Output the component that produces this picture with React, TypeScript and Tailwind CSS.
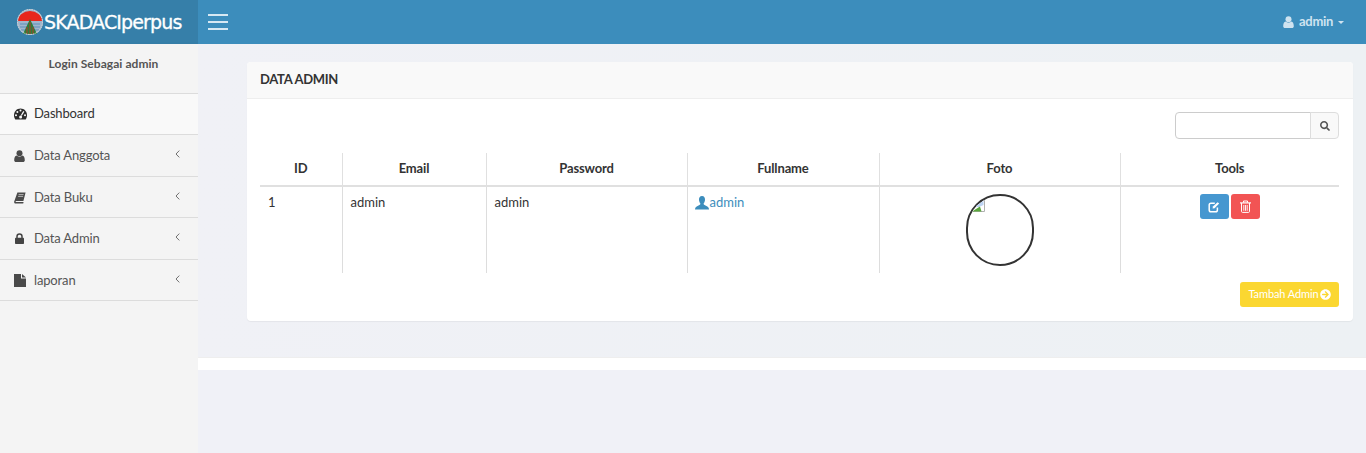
import { FaSearch, FaArrowCircleRight } from "react-icons/fa";
import type { ReactNode } from "react";

function GaugeIcon() {
  return (
    <svg width="13" height="12" viewBox="0 0 13 12" className="shrink-0">
      <path d="M6.5 0.5 C10.2 0.5 13 3.4 13 7.2 C13 8.8 12.5 10.2 11.7 11.5 H1.3 C0.5 10.2 0 8.8 0 7.2 C0 3.4 2.8 0.5 6.5 0.5 Z" fill="#2b2b2b" />
      <circle cx="2" cy="7.2" r="1" fill="#f9f9f9" />
      <circle cx="3.4" cy="3.9" r="1" fill="#f9f9f9" />
      <circle cx="6.5" cy="2.5" r="1" fill="#f9f9f9" />
      <circle cx="11" cy="7.2" r="1" fill="#f9f9f9" />
      <path d="M9.8 3.4 L7.3 7.5" stroke="#f9f9f9" strokeWidth="1.3" />
      <circle cx="6.6" cy="8.9" r="1.5" fill="#f9f9f9" />
    </svg>
  );
}

function UserIcon({ className = "" }: { className?: string }) {
  return (
    <svg width="11" height="12" viewBox="0 0 11 12" className={className} fill="currentColor">
      <circle cx="5.5" cy="3.2" r="3" />
      <path d="M0.2 10.2 C0.2 7.8 1 6 2.6 5.6 C3.4 6.3 4.4 6.7 5.5 6.7 C6.6 6.7 7.6 6.3 8.4 5.6 C10 6 10.8 7.8 10.8 10.2 C10.8 11.3 10 12 9 12 H2 C1 12 0.2 11.3 0.2 10.2 Z" />
    </svg>
  );
}

function BookIcon() {
  return (
    <svg width="12" height="12" viewBox="0 0 12 12" className="shrink-0">
      <path d="M3.4 0.5 H11.6 L9.4 9 H2.2 C1.6 9 1.4 9.6 1.8 10 H9.6 L9.2 11.5 H1.4 C0.4 11.5 -0.1 10.4 0.2 9.4 Z" fill="#4a4a4a" />
      <path d="M4.6 2.6 H9.6 M4.1 4.4 H9.1" stroke="#cfcfcf" strokeWidth="0.8" />
    </svg>
  );
}

function LockIcon() {
  return (
    <svg width="9" height="11" viewBox="0 0 9 11" fill="none">
      <path d="M2 5 V3.4 C2 1.9 3 1 4.5 1 C6 1 7 1.9 7 3.4 V5" stroke="#444" strokeWidth="1.5" />
      <rect x="0" y="4.8" width="9" height="6.2" rx="0.8" fill="#444" />
    </svg>
  );
}

function FileIcon() {
  return (
    <svg width="12" height="13" viewBox="0 0 12 13">
      <path d="M0 0 H7 V4.5 H12 V13 H0 Z" fill="#4a4a4a" />
      <path d="M8 0 L12 3.6 H8 Z" fill="#4a4a4a" />
    </svg>
  );
}

function Chevron() {
  return (
    <svg width="5" height="8" viewBox="0 0 5 8" fill="none" className="-mt-[4px] shrink-0">
      <path d="M4.3 0.6 L1 4 L4.3 7.4" stroke="#707070" strokeWidth="1" />
    </svg>
  );
}

function EditIcon() {
  return (
    <svg width="12" height="12" viewBox="0 0 12 12" fill="none">
      <path d="M6.8 2.2 H3 C2 2.2 1.2 3 1.2 4 V9 C1.2 10 2 10.8 3 10.8 H7.6 C8.6 10.8 9.4 10 9.4 9 V6.6" stroke="#fff" strokeWidth="1.5" />
      <path d="M4.6 7.6 L4.9 5.6 L9.6 1.2 L11.2 2.6 L6.6 7.3 Z" fill="#fff" />
    </svg>
  );
}

function TrashIcon() {
  return (
    <svg width="11" height="13" viewBox="0 0 11 13" fill="none">
      <path d="M0 2.9 H11" stroke="#fff" strokeWidth="1.2" />
      <path d="M3.5 2.6 V1 H7.5 V2.6" stroke="#fff" strokeWidth="1" />
      <path d="M1.5 3 V11.4 C1.5 12 1.9 12.4 2.4 12.4 H8.6 C9.1 12.4 9.5 12 9.5 11.4 V3" stroke="#fff" strokeWidth="1" />
      <path d="M3.8 5 V10.8 M5.5 5 V10.8 M7.2 5 V10.8" stroke="#fff" strokeWidth="0.9" />
    </svg>
  );
}

const menu: { label: string; icon: ReactNode; height: string }[] = [
  { label: "Data Anggota", icon: <UserIcon className="text-[#4a4a4a]" />, height: "h-[42px]" },
  { label: "Data Buku", icon: <BookIcon />, height: "h-[41px] pt-px" },
  { label: "Data Admin", icon: <LockIcon />, height: "h-[42px]" },
  { label: "laporan", icon: <FileIcon />, height: "h-[41px] pt-px" },
];

function Logo() {
  return (
    <svg width="26" height="26" viewBox="0 0 26 26" className="shrink-0">
      <circle cx="13" cy="13" r="13" fill="#9fb6cc" />
      <path d="M1 12 A12 10 0 0 1 25 12 Z" fill="#e8271c" />
      <path d="M3 15 H23 M3 18 H23 M4 21 H22" stroke="#5f8fb8" strokeWidth="1" />
      <path d="M13 10 L20 25 H6 Z" fill="#2f7d3a" />
      <path d="M13 13 V25 M10 18 V25 M16 18 V25" stroke="#b13a2a" strokeWidth="1" />
      <circle cx="13" cy="13" r="12.5" fill="none" stroke="#d8d8d8" strokeWidth="1" strokeDasharray="1.5 1" />
    </svg>
  );
}

function BrokenImage() {
  return (
    <svg width="16" height="16" viewBox="0 0 16 16" className="absolute left-px top-0">
      <path d="M0.5 0.5 H15.5 V15.5 H0.5 Z" fill="#fff" stroke="#b0b0b0" />
      <path d="M2 2 H14.5 V9 L10 11 H2 Z" fill="#bcd3f2" />
      <path d="M3 15.5 L11 10.5 L12.5 15.5 Z" fill="#5aa83c" />
    </svg>
  );
}

function PersonGlyph() {
  return (
    <svg width="14" height="14" viewBox="0 0 14 14" className="shrink-0 -ml-px text-[#3c8dbc]" fill="currentColor">
      <path d="M7 0 C9.2 0 10.2 1.7 10 4 C9.9 5.6 9.2 6.8 8.6 7.5 C8.4 8.4 9 8.8 10.5 9.5 C12.5 10.4 14 11 14 13.5 H0 C0 11 1.5 10.4 3.5 9.5 C5 8.8 5.6 8.4 5.4 7.5 C4.8 6.8 4.1 5.6 4 4 C3.8 1.7 4.8 0 7 0 Z" />
    </svg>
  );
}

const thClass = "h-[33px] border-l border-b-2 border-[#e0e0e0] text-center align-middle text-[13px] font-bold tracking-[-0.15px] text-[#333] first:border-l-0";
const tdClass = "h-[87px] border-l border-[#dddddd] align-top px-2 pt-[6px] text-[13px] text-[#333] first:border-l-0";

export default function App() {
  return (
    <div className="min-h-[453px] flex flex-col bg-[#f0f1f7] font-['Lato','Liberation_Sans',sans-serif]">
      <header className="h-[44px] flex bg-[#3c8dbc] shrink-0">
        <div className="w-[198px] flex items-center pl-[17px] gap-px bg-[#367fa9]">
          <Logo />
          <span className="text-white text-[19px] font-['DejaVu_Sans',sans-serif] tracking-[-0.85px] whitespace-nowrap [-webkit-text-stroke:0.3px_white]">SKADACIperpus</span>
        </div>
        <div className="flex-1 flex items-center justify-between pl-[10px] pr-[22px]">
          <div className="w-[20px] flex flex-col gap-[5px] -mt-[1px]">
            <span className="h-[2px] bg-[#d6e8f3]" />
            <span className="h-[2px] bg-[#d6e8f3]" />
            <span className="h-[2px] bg-[#d6e8f3]" />
          </div>
          <div className="flex items-center text-[#cfe3f0] text-[13px] font-bold tracking-[-0.3px]">
            <UserIcon className="mr-[5px]" />
            <span>admin</span>
            <span className="ml-[5px] w-0 h-0 border-x-[3px] border-t-[3px] border-x-transparent border-t-[#cfe3f0]" />
          </div>
        </div>
      </header>

      <div className="flex-1 flex">
        <aside className="w-[198px] shrink-0 bg-[#f4f4f4] shadow-[1px_0_3px_rgba(0,0,0,0.04)] text-[13px] tracking-[-0.15px] text-[#444]">
          <div className="h-[50px] pt-[11px] pl-[9px] text-center font-bold text-[12px] tracking-[0.05px] text-[#555] border-b border-[#dcdcdc]">Login Sebagai admin</div>
          <div className="h-[41px] flex items-center pl-[14px] gap-[7px] bg-[#f9f9f9] border-b border-[#dcdcdc] text-[#333]">
            <GaugeIcon />
            <span>Dashboard</span>
          </div>
          {menu.map(({ label, icon, height }) => (
            <div key={label} className={`${height} flex items-center pl-[13px] pr-[18px] border-b border-[#dcdcdc]`}>
              <span className="w-[21px] pr-[8px] flex justify-center">{icon}</span>
              <span className="flex-1 text-[#555]">{label}</span>
              <Chevron />
            </div>
          ))}
        </aside>

        <div className="flex-1 flex flex-col">
          <main className="h-[313px] bg-linear-to-r from-[#f0f1f6] to-[#edf1f4] pt-[18px] pl-[49px] pr-[13px]">
            <section className="h-[259px] bg-white rounded-[4px] shadow-[0_1px_1px_rgba(0,0,0,0.05)]">
              <div className="h-[37px] bg-[#f9f9f9] border-b border-[#eeeeee] rounded-t-[4px] pl-[13px] flex items-center text-[13px] font-bold tracking-[-0.3px] text-[#333]">DATA ADMIN</div>
              <div className="px-[13px] pt-[13px] pr-[14px]">
                <div className="flex justify-end">
                  <div className="w-[136px] h-[27px] border border-[#cccccc] rounded-l-[4px] bg-white" />
                  <div className="w-[29px] h-[27px] -ml-px border border-[#dddddd] rounded-r-[4px] bg-[#f9f9f9] flex items-center justify-center">
                    <FaSearch className="w-[10px] h-[10px] text-[#555]" />
                  </div>
                </div>
                <table className="w-[1079px] mt-[14px] table-fixed border-collapse">
                  <colgroup>
                    <col className="w-[82px]" />
                    <col className="w-[144px]" />
                    <col className="w-[201px]" />
                    <col className="w-[192px]" />
                    <col className="w-[241px]" />
                    <col className="w-[219px]" />
                  </colgroup>
                  <thead>
                    <tr>
                      {["ID", "Email", "Password", "Fullname", "Foto", "Tools"].map((h) => (
                        <th key={h} className={thClass}>{h}</th>
                      ))}
                    </tr>
                  </thead>
                  <tbody>
                    <tr>
                      <td className={tdClass}>1</td>
                      <td className={tdClass}>admin</td>
                      <td className={tdClass}>admin</td>
                      <td className={tdClass}>
                        <span className="flex items-center text-[#3c8dbc]"><PersonGlyph /><span className="ml-px">admin</span></span>
                      </td>
                      <td className={tdClass}>
                        <div className="flex justify-center mt-px">
                          <div className="relative w-[68px] h-[72px] border-2 border-[#333] rounded-full overflow-hidden">
                            <BrokenImage />
                          </div>
                        </div>
                      </td>
                      <td className={tdClass}>
                        <div className="flex justify-center gap-[2px] mt-px">
                          <button className="w-[29px] h-[25px] bg-[#4697d0] rounded-[3px] flex items-center justify-center"><EditIcon /></button>
                          <button className="w-[29px] h-[25px] bg-[#f25454] rounded-[3px] flex items-center justify-center"><TrashIcon /></button>
                        </div>
                      </td>
                    </tr>
                  </tbody>
                </table>
                <div className="flex justify-end mt-[9px]">
                  <button className="w-[99px] h-[25px] bg-[#fbd731] rounded-[3px] flex items-center justify-center gap-px text-white text-[11px] tracking-[-0.1px]">
                    Tambah Admin <FaArrowCircleRight className="w-[11px] h-[11px]" />
                  </button>
                </div>
              </div>
            </section>
          </main>
          <footer className="h-[13px] bg-white border-t border-[#eeeeee]" />
          <div className="flex-1 bg-[#f0f1f7]" />
        </div>
      </div>
    </div>
  );
}
